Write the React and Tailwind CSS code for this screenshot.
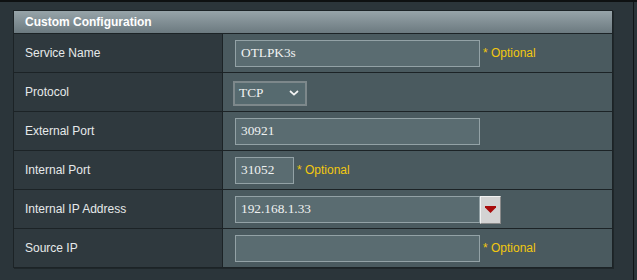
import React from "react";

function Label({ children }) {
  return (
    <div className="w-[209px] shrink-0 border-r border-[#1c2326] bg-[#2f393e] pl-[11px] flex items-center text-[12px] text-[#e6e9ea] font-['Liberation_Sans',Arial,sans-serif]">
      {children}
    </div>
  );
}

function Optional() {
  return (
    <span className="ml-[3px] text-[12px] text-[#f2c80f] font-['Liberation_Sans',Arial,sans-serif]">* Optional</span>
  );
}

function Input({ value, w = "w-[245px]" }) {
  return (
    <div className={`${w} h-[27px] shrink-0 border border-[#93a2a6] bg-[#5a6c71] pl-[5px] flex items-center text-[13.33px] text-[#f0f2f2] font-['Liberation_Serif','Times_New_Roman',serif]`}>
      {value}
    </div>
  );
}

function Row({ label, children }) {
  return (
    <div className="flex h-[39px] border-t border-[#1c2326]">
      <Label>{label}</Label>
      <div className="flex-1 bg-[#4a5a5f] flex items-center pl-[12px]">{children}</div>
    </div>
  );
}

export default function App() {
  return (
    <div className="w-[637px] h-[280px] bg-[#2b353a] border-t-2 border-[#0e1112] overflow-hidden flex">
      <div className="w-[634px] h-full border-r border-[#101415] pt-[8px] pl-[13px]">
        <div className="w-[600px] border border-[#1c2326] shadow-[1px_1px_0_#1f272a]">
          <div className="h-[22px] bg-linear-to-b from-[#97a4a9] to-[#6c7a80] flex items-center pl-[11px] text-[12px] font-bold text-white font-['Liberation_Sans',Arial,sans-serif]">
            Custom Configuration
          </div>
          <Row label="Service Name">
            <Input value="OTLPK3s" />
            <Optional />
          </Row>
          <Row label="Protocol">
            <div className="-ml-[2px] mt-[2px] w-[74px] h-[25px] border-2 border-[#7d888b] bg-[#566a6f] flex items-center justify-between pl-[4px] pr-[6px] text-[13.33px] text-[#f0f2f2] font-['Liberation_Serif','Times_New_Roman',serif]">
              <span>TCP</span>
              <svg width="10" height="6" viewBox="0 0 10 6" fill="none">
                <path d="M1 1l4 3.6L9 1" stroke="#f4f4f4" strokeWidth="1.7" />
              </svg>
            </div>
          </Row>
          <Row label="External Port">
            <Input value="30921" />
          </Row>
          <Row label="Internal Port">
            <Input value="31052" w="w-[59px]" />
            <Optional />
          </Row>
          <Row label="Internal IP Address">
            <Input value="192.168.1.33" />
            <div className="w-[21px] h-[28px] mt-[1px] border border-t-[#f2f2f2] border-l-[#f2f2f2] border-r-[#8a8a8a] border-b-[#8a8a8a] bg-[#d3d3d3] flex items-center justify-center">
              <svg width="11" height="7" viewBox="0 0 11 7">
                <path d="M0 0h11v1.5L5.5 7 0 1.5z" fill="#a80c0c" />
              </svg>
            </div>
          </Row>
          <Row label="Source IP">
            <Input value="" />
            <Optional />
          </Row>
        </div>
      </div>
    </div>
  );
}
